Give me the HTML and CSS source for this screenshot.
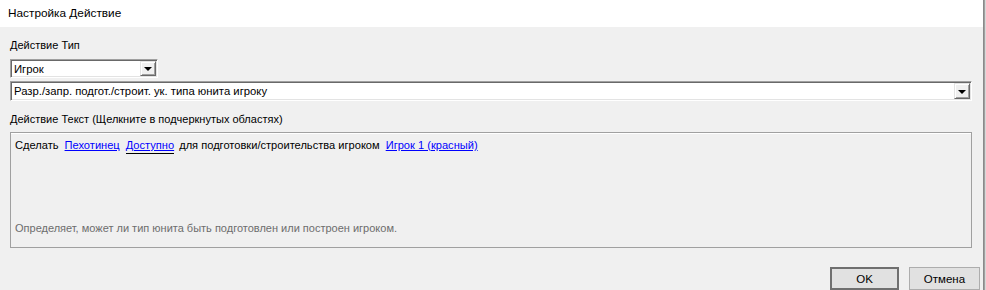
FILE: index.html
```html
<!DOCTYPE html>
<html lang="ru">
<head>
<meta charset="utf-8">
<link rel="stylesheet" href="styles.css">
</head>
<body>
<div class="window">
  <div class="dialog">
    <div class="titlebar">Настройка Действие</div>
    <div class="content">
      <div class="label label-type">Действие Тип</div>
      <div class="combo combo-small">
        <span class="combo-text">Игрок</span>
        <span class="drop-btn"><span class="tri"></span></span>
      </div>
      <div class="combo combo-wide">
        <span class="combo-text">Разр./запр. подгот./строит. ук. типа юнита игроку</span>
        <span class="drop-btn"><span class="tri"></span></span>
      </div>
      <div class="label label-text">Действие Текст (Щелкните в подчеркнутых областях)</div>
      <div class="textbox">
        <div class="sentence"><span>Сделать</span><a class="lnk">Пехотинец</a><a class="lnk focused">Доступно</a><span class="plain">для подготовки/строительства игроком</span><a class="lnk">Игрок 1 (красный)</a></div>
        <div class="desc">Определяет, может ли тип юнита быть подготовлен или построен игроком.</div>
      </div>
      <div class="buttons">
        <button class="btn btn-default">OK</button>
        <button class="btn">Отмена</button>
      </div>
    </div>
  </div>
  <div class="edge"></div>
</div>
</body>
</html>
```

FILE: styles.css
```css
* { box-sizing: border-box; }
html, body {
  margin: 0;
  padding: 0;
  width: 986px;
  height: 290px;
  overflow: hidden;
  background: #f0f0f0;
  font-family: "Liberation Sans", Arial, sans-serif;
  font-size: 11px;
  color: #000;
}
.window {
  display: flex;
  width: 986px;
  height: 290px;
}
.dialog {
  flex: 0 0 983px;
  display: flex;
  flex-direction: column;
  background: #f0f0f0;
}
.edge {
  flex: 0 0 3px;
  background: #a0a0a0;
  border-left: 1px solid #8a8a8a;
  border-right: 1px solid #d8d8d8;
}
.titlebar {
  height: 29px;
  background: #fff;
  padding-left: 8px;
  line-height: 27px;
  font-size: 11.8px;
}
.content {
  padding: 0 11px 0 10px;
  display: flex;
  flex-direction: column;
}
.label {
  line-height: 14px;
  height: 14px;
}
.label-type { margin-top: 11px; }
.label-text { margin-top: 11px; }
.combo {
  display: flex;
  align-items: stretch;
  background: #fff;
  border-top: 1px solid #a0a0a0;
  border-left: 1px solid #a0a0a0;
  border-right: 1px solid #fff;
  border-bottom: 1px solid #fff;
  box-shadow: inset 1px 1px 0 #696969, inset -1px -1px 0 #e3e3e3;
  padding: 2px 2px 2px 3px;
}
.combo-small {
  margin-top: 7px;
  width: 148px;
  height: 19px;
}
.combo-wide {
  margin-top: 3px;
  width: 962px;
  height: 20px;
}
.combo-text {
  flex: 1;
  line-height: 14px;
  font-size: 11.3px;
  white-space: nowrap;
  overflow: hidden;
}
.drop-btn {
  flex: 0 0 16px;
  display: flex;
  align-items: center;
  justify-content: center;
  background: #f0f0f0;
  border-top: 1px solid #e3e3e3;
  border-left: 1px solid #e3e3e3;
  border-right: 1px solid #696969;
  border-bottom: 1px solid #696969;
  box-shadow: inset 1px 1px 0 #fff, inset -1px -1px 0 #a0a0a0;
  margin: -1px -1px -1px 0;
}
.tri {
  width: 0;
  height: 0;
  border-left: 4px solid transparent;
  border-right: 4px solid transparent;
  border-top: 4px solid #000;
  margin-top: 1px;
}
.textbox {
  margin-top: 6px;
  width: 962px;
  height: 116px;
  border: 1px solid #a0a0a0;
  box-shadow: inset 0 1px 0 #fff;
  padding: 5px 4px 12px 4px;
  display: flex;
  flex-direction: column;
  justify-content: space-between;
}
.sentence {
  display: flex;
  line-height: 14px;
  font-size: 11.1px;
  white-space: nowrap;
}
.lnk {
  color: #0000ff;
  text-decoration: underline;
  margin-left: 6px;
  cursor: pointer;
}
.focused {
  border-bottom: 1px solid #000;
  padding-bottom: 1px;
  margin-bottom: -2px;
}
.plain { margin-left: 5px; }
.plain + .lnk { margin-left: 6px; }
.desc {
  color: #6d6d6d;
  line-height: 14px;
}
.buttons {
  margin-top: 19px;
  margin-right: -8px;
  display: flex;
  justify-content: flex-end;
  gap: 10px;
}
.btn {
  font-family: "Liberation Sans", Arial, sans-serif;
  font-size: 11.5px;
  width: 71px;
  height: 23px;
  background: #e1e1e1;
  border: 1px solid #adadad;
  padding: 0;
  color: #000;
}
.btn-default {
  border: 2px solid #6f6f6f;
  width: 69px;
}
```
